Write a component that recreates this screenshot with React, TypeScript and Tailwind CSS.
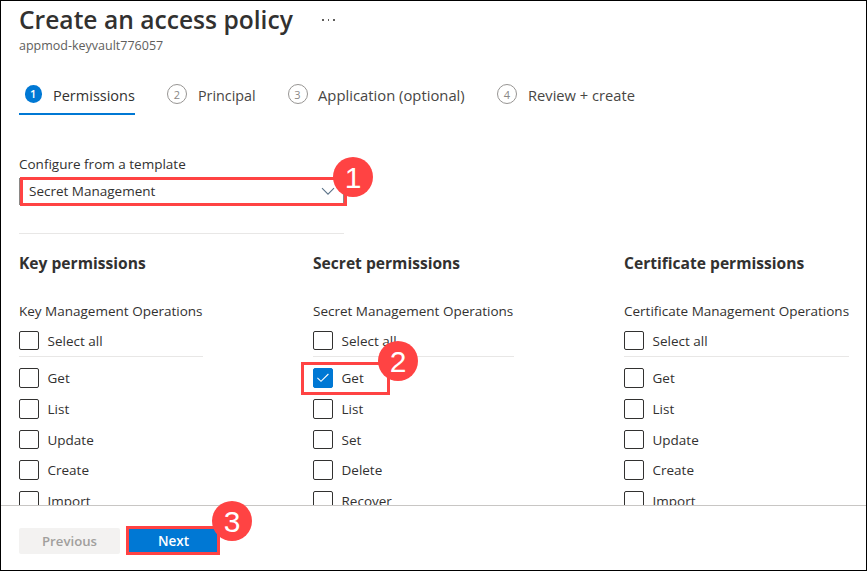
import clsx from "clsx";

type Column = {
  title: string;
  group: string;
  items: string[];
  checked?: string;
  width: string;
};

const columns: Column[] = [
  {
    title: "Key permissions",
    group: "Key Management Operations",
    items: ["Get", "List", "Update", "Create", "Import"],
    width: "w-[184px] mr-[110px]",
  },
  {
    title: "Secret permissions",
    group: "Secret Management Operations",
    items: ["Get", "List", "Set", "Delete", "Recover"],
    checked: "Get",
    width: "w-[201px] mr-[110px]",
  },
  {
    title: "Certificate permissions",
    group: "Certificate Management Operations",
    items: ["Get", "List", "Update", "Create", "Import"],
    width: "w-[225px]",
  },
];

const steps = [
  { label: "Permissions", active: true, box: "w-[116px] mr-8", text: "mt-0.5 text-[14.5px]" },
  { label: "Principal", active: false, box: "w-[88px] mr-[32.5px]", text: "mt-0.5 text-[14.3px]" },
  { label: "Application (optional)", active: false, box: "w-[177px] mr-[32.5px]", text: "mt-px -ml-[0.5px] text-[14.8px]" },
  { label: "Review + create", active: false, box: "w-[140px]", text: "mt-px text-[14.7px]" },
];

const itemHeights = ["h-[31px]", "h-[31px]", "h-[30px]", "h-[31px]", "h-[31px]"];
const boxHeights = ["h-5", "h-5", "h-[19px]", "h-5", "h-5"];

function Badge({ n, className }: { n: number; className: string }) {
  return (
    <span
      className={clsx(
        "absolute z-20 flex size-10 items-center justify-center rounded-full bg-[#ff4343] pt-px font-['Liberation_Sans',sans-serif] text-[30px] leading-none font-normal text-white",
        className,
      )}
    >
      {n}
    </span>
  );
}

function Checkbox({ label, checked = false, height }: { label: string; checked?: boolean; height: string }) {
  return (
    <div className="flex items-start">
      <span
        className={clsx(
          "flex w-5 shrink-0 items-center justify-center rounded-[2px] border",
          height,
          checked ? "border-[#0078d4] bg-[#0078d4]" : "border-[#323130] bg-white",
        )}
      >
        {checked && (
          <svg width="14" height="10" viewBox="0 0 14 10" fill="none" stroke="white" strokeWidth="1.1">
            <path d="M1.4 4.8 5 8.3 12.4 1" />
          </svg>
        )}
      </span>
      <span className="ml-[8.5px] leading-5">{label}</span>
    </div>
  );
}

export default function App() {
  return (
    <div className="flex h-[571px] w-[867px] flex-col overflow-hidden border border-black bg-white font-['Open_Sans','Noto_Sans',sans-serif] text-[13.5px] text-[#323130]">
      <main className="h-[504px] shrink-0 overflow-hidden pl-[18px]">
        <header className="pt-[3px]">
          <div className="flex h-8 items-center">
            <h1 className="w-[303px] text-[24.6px] leading-8 font-semibold whitespace-nowrap">Create an access policy</h1>
            <span className="flex gap-1">
              <i className="size-[1.5px] bg-[#605e5c]" />
              <i className="size-[1.5px] bg-[#605e5c]" />
              <i className="size-[1.5px] bg-[#605e5c]" />
            </span>
          </div>
          <p className="text-[12.5px] leading-5 text-[#605e5c]">appmod-keyvault776057</p>
        </header>

        <nav className="mt-6 flex h-[35px]">
          {steps.map((s, i) => (
            <div
              key={s.label}
              className={clsx("flex items-start pt-1 whitespace-nowrap", s.box, s.active && "border-b-2 border-[#0078d4]")}
            >
              <span
                className={clsx(
                  "flex shrink-0 items-center justify-center rounded-full text-[11px] leading-none",
                  s.active
                    ? "mt-px mr-[11px] ml-[5.5px] size-[17.5px] bg-[#0078d4] font-semibold text-white"
                    : "mr-[11px] size-5 border border-[#979593] text-[#8a8886]",
                )}
              >
                {i + 1}
              </span>
              <span className={clsx("leading-5", s.text, s.active ? "font-medium" : "text-[#484644]")}>{s.label}</span>
            </div>
          ))}
        </nav>

        <section className="mt-[39px] w-[325px]">
          <label className="block h-5 leading-5">Configure from a template</label>
          <div className="relative mt-[3px] ml-px flex h-[29px] w-[327px] items-center justify-between border-[3px] border-[#ff4343] pr-[9px] pl-1.5">
            <span className="mb-[2px] leading-5">Secret Management</span>
            <svg width="14" height="9" viewBox="0 0 14 9" fill="none" stroke="#5c7389" strokeWidth="1.1">
              <path d="M1 1.2 7 7.2 13 1.2" />
            </svg>
            <span className="absolute inset-y-0 right-0 border-r border-[#8a8886]" />
            <span className="absolute -inset-y-0.5 -left-1 border-r border-[#8a8886]" />
            <Badge n={1} className="-top-[23px] left-[310px]" />
          </div>
          <hr className="mt-[27px] border-[#e8e7e6]" />
        </section>

        <section className="mt-[17px] flex">
          {columns.map((c) => (
            <div key={c.title} className={clsx("relative shrink-0 whitespace-nowrap", c.width)}>
              <h2 className="text-[15.6px] leading-6 font-bold">{c.title}</h2>
              <div className="mt-[26px] leading-5">{c.group}</div>
              <div className="mt-[10px] flex h-[26px] border-b border-[#e8e7e6]">
                <Checkbox label="Select all" height="h-[19px]" />
              </div>
              <div className="mt-[11px]">
                {c.items.map((item, i) => (
                  <div key={item} className={itemHeights[i]}>
                    <Checkbox label={item} checked={item === c.checked} height={boxHeights[i]} />
                  </div>
                ))}
              </div>
              {c.checked && (
                <>
                  <div className="absolute top-[111px] -left-3 h-[33px] w-[89px] border-[3px] border-[#ff4343]" />
                  <Badge n={2} className="top-[90px] left-[65px]" />
                </>
              )}
            </div>
          ))}
        </section>
      </main>

      <footer className="flex grow items-start border-t border-[#c8c6c4] bg-white pt-5 pl-[18px]">
        <button className="mt-0.5 h-[26px] w-[101px] rounded-[2px] bg-[#f3f2f1] text-[13.2px] leading-5 font-semibold text-[#a19f9d]">Previous</button>
        <div className="relative ml-1.5 h-[29px] w-[94px] border-[3px] border-[#ff4343]">
          <button className="block h-[23px] w-full bg-[#0078d4] pl-px leading-5 font-semibold text-white">Next</button>
          <Badge n={3} className="-top-7 left-[83px]" />
        </div>
      </footer>
    </div>
  );
}
